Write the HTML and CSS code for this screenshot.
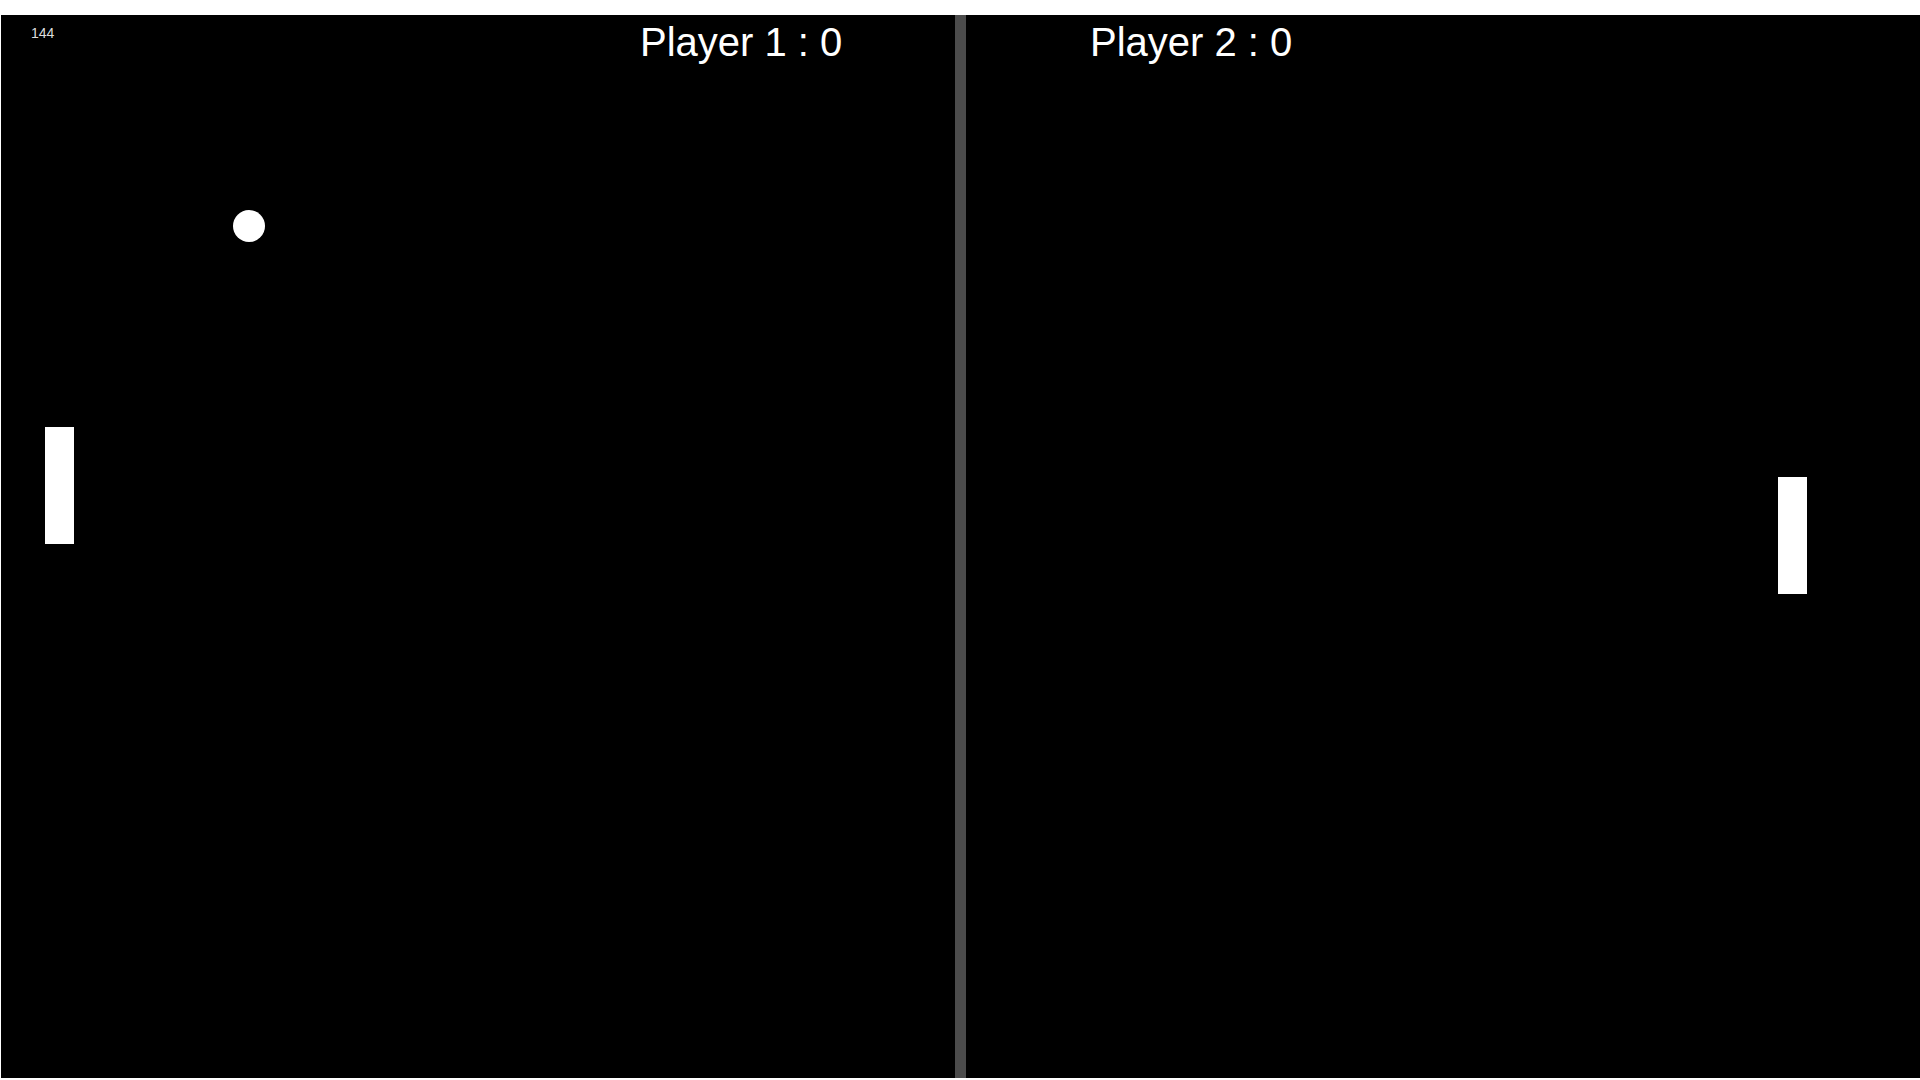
FILE: index.html
```html
<!DOCTYPE html>
<html lang="en">
<head>
<meta charset="utf-8">
<title>Pong</title>
<link rel="stylesheet" href="styles.css">
</head>
<body>
<main class="game">
  <section class="court court-left">
    <div class="fps">144</div>
    <div class="score score-left">Player 1 : 0</div>
    <div class="ball"></div>
    <div class="paddle paddle-left"></div>
  </section>
  <div class="divider"></div>
  <section class="court court-right">
    <div class="score score-right">Player 2 : 0</div>
    <div class="paddle paddle-right"></div>
  </section>
</main>
</body>
</html>
```

FILE: styles.css
```css
html, body {
  margin: 0;
  padding: 0;
  background: #ffffff;
}

body {
  width: 1920px;
  height: 1080px;
  overflow: hidden;
  padding: 15px 0 0 1px;
  box-sizing: border-box;
  font-family: "Liberation Sans", Arial, sans-serif;
}

.game {
  display: flex;
  height: 1063px;
}

.court {
  position: relative;
  width: 954px;
  background: #000000;
  color: #ffffff;
  flex: none;
}

.divider {
  width: 11px;
  flex: none;
  background: #4b4b4b;
}

.fps {
  position: absolute;
  left: 30px;
  top: 11px;
  font-size: 14px;
  line-height: 14px;
  color: #dddddd;
}

.score {
  padding-top: 7px;
  font-size: 40px;
  line-height: 40px;
  white-space: nowrap;
}

.score-left {
  padding-left: 639px;
}

.score-right {
  padding-left: 124px;
}

.ball {
  position: absolute;
  left: 232px;
  top: 195px;
  width: 32px;
  height: 32px;
  border-radius: 50%;
  background: #ffffff;
}

.paddle {
  position: absolute;
  width: 29px;
  height: 117px;
  background: #ffffff;
}

.paddle-left {
  left: 44px;
  top: 412px;
}

.paddle-right {
  left: 812px;
  top: 462px;
}
```
